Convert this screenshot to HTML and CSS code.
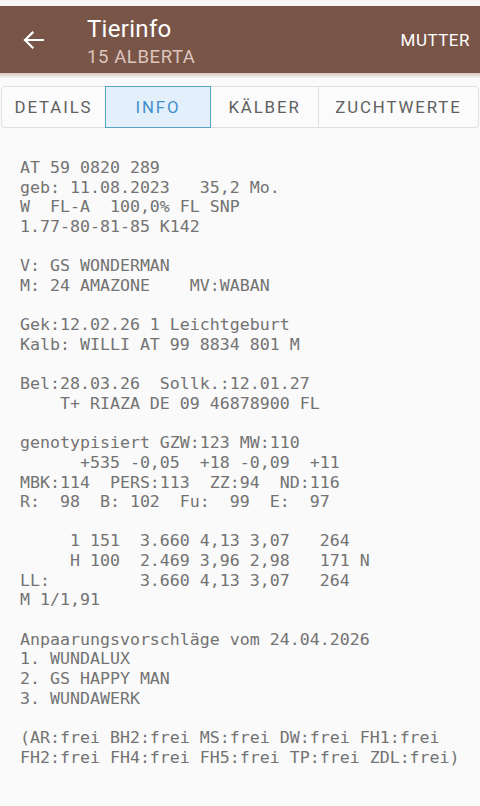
FILE: index.html
```html
<!DOCTYPE html>
<html lang="de">
<head>
<meta charset="utf-8">
<title>Tierinfo</title>
<link rel="stylesheet" href="styles.css">
</head>
<body>
<div class="status"></div>
<header class="toolbar">
  <div class="back">
    <svg width="24" height="20" viewBox="0 0 24 20"><path d="M3 10H21M10.5 2.6L3 10l7.5 7.4" fill="none" stroke="#fff" stroke-width="2.2" stroke-linecap="square"/></svg>
  </div>
  <div class="titles">
    <div class="title">Tierinfo</div>
    <div class="subtitle">15 ALBERTA</div>
  </div>
  <div class="action">MUTTER</div>
</header>
<div class="shadow"></div>
<nav class="tabs">
  <div class="tab t-details">DETAILS</div>
  <div class="tab t-info active">INFO</div>
  <div class="tab t-kaelber">KÄLBER</div>
  <div class="tab t-zucht">ZUCHTWERTE</div>
</nav>
<pre class="info">AT 59 0820 289
geb: 11.08.2023   35,2 Mo.
W  FL-A  100,0% FL SNP
1.77-80-81-85 K142

V: GS WONDERMAN
M: 24 AMAZONE    MV:WABAN

Gek:12.02.26 1 Leichtgeburt
Kalb: WILLI AT 99 8834 801 M

Bel:28.03.26  Sollk.:12.01.27
    T+ RIAZA DE 09 46878900 FL

genotypisiert GZW:123 MW:110
      +535 -0,05  +18 -0,09  +11
MBK:114  PERS:113  ZZ:94  ND:116
R:  98  B: 102  Fu:  99  E:  97

     1 151  3.660 4,13 3,07   264
     H 100  2.469 3,96 2,98   171 N
LL:         3.660 4,13 3,07   264
M 1/1,91

Anpaarungsvorschläge vom 24.04.2026
1. WUNDALUX
2. GS HAPPY MAN
3. WUNDAWERK

(AR:frei BH2:frei MS:frei DW:frei FH1:frei
FH2:frei FH4:frei FH5:frei TP:frei ZDL:frei)</pre>
</body>
</html>
```

FILE: styles.css
```css
html, body {
  margin: 0;
  padding: 0;
  background: #fafafa;
  width: 480px;
  height: 806px;
  overflow: hidden;
}
body {
  font-family: Roboto, "Noto Sans", sans-serif;
}
.status {
  height: 6px;
  background: #f7f5f5;
}
.toolbar {
  height: 67px;
  background: #795548;
  display: flex;
  align-items: center;
  color: #fff;
}
.back {
  width: 87px;
  display: flex;
  align-items: center;
  padding-left: 22px;
  box-sizing: border-box;
  margin-top: 1px;
}
.back svg { display: block; }
.titles {
  flex: 1;
  display: flex;
  flex-direction: column;
  margin-top: 5px;
}
.title {
  font-size: 24px;
  line-height: 28px;
  letter-spacing: 0.3px;
  color: #fff;
}
.subtitle {
  font-size: 18.5px;
  line-height: 24px;
  margin-top: 2px;
  letter-spacing: 0.6px;
  color: #dcc6bf;
}
.action {
  font-size: 17px;
  padding-right: 10px;
  letter-spacing: 0.5px;
  margin-top: 1px;
}
.shadow {
  height: 5px;
  background: linear-gradient(#d7c7c2, #f5f2f1);
}
.tabs {
  margin: 8px 1px 0 1px;
  height: 42px;
  display: flex;
  border: 1px solid #e0e0e0;
  border-radius: 4px;
  background: #fbfbfb;
  box-sizing: border-box;
}
.tab {
  display: flex;
  align-items: center;
  justify-content: center;
  font-size: 16.8px;
  letter-spacing: 1.9px;
  color: #606060;
  box-sizing: border-box;
}
.t-details { width: 103px; }
.t-info { width: 106px; }
.t-kaelber { width: 108px; border-right: 1px solid #e0e0e0; }
.t-zucht { flex: 1; }
.tab.active {
  background: #e3f0fb;
  border: 1px solid #5aa4c8;
  color: #3f8fc9;
  margin: -1px 0;
  height: 42px;
}
.info {
  margin: 30px 0 0 0;
  padding-left: 20px;
  font-family: "DejaVu Sans Mono", "Liberation Mono", monospace;
  font-size: 16.6px;
  line-height: 19.66px;
  color: #737373;
}
```
